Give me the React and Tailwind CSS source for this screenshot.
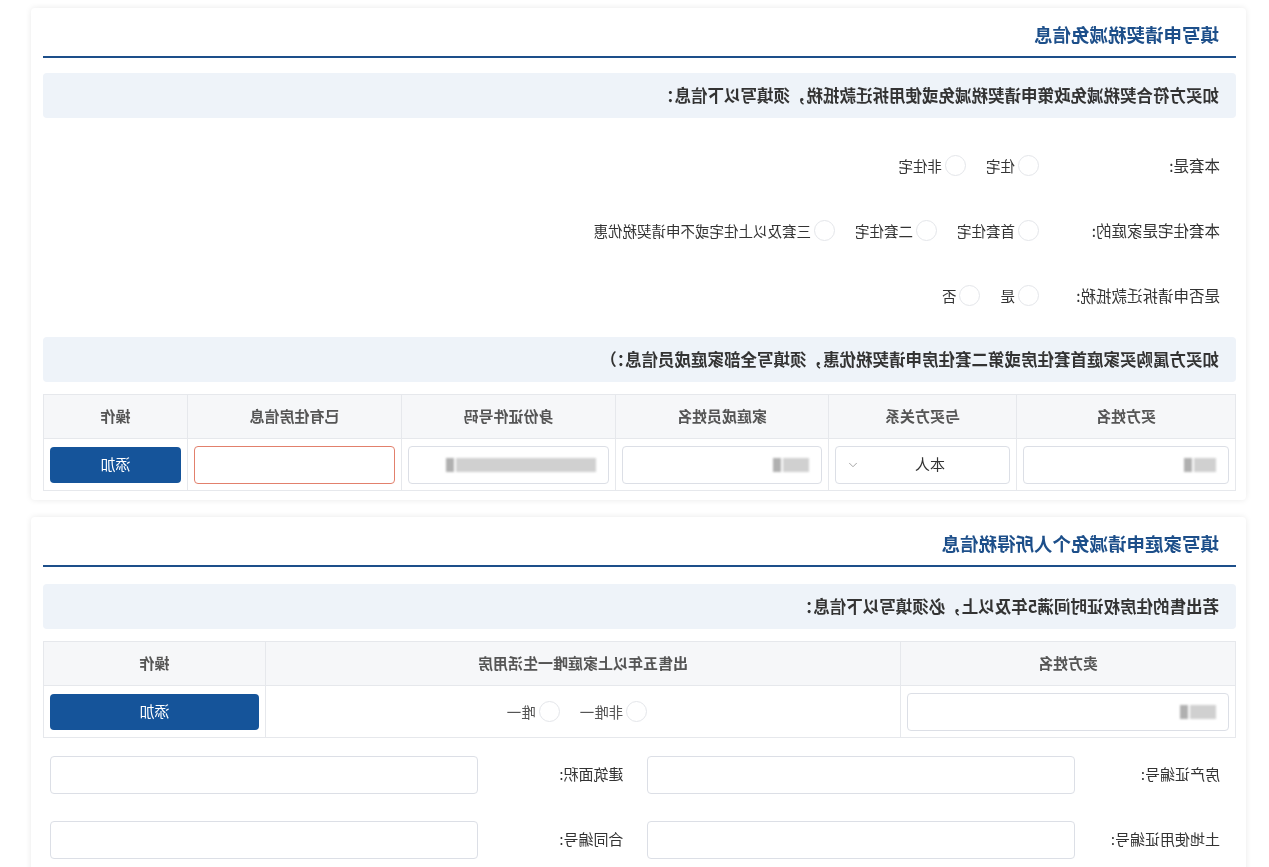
import { ChevronDown } from "lucide-react";

const FONT = { fontFamily: '"Noto Sans CJK SC", "Noto Sans", sans-serif' };

function Blur({ w }) {
  return (
    <span className="inline-flex items-center gap-[2px] blur-[1px]">
      <span className={`inline-block h-[14px] bg-[#d0d0d0] ${w}`} />
      <span className="inline-block h-[14px] w-[8px] bg-[#b0b0b0]" />
    </span>
  );
}

function Radio({ label }) {
  return (
    <label className="flex items-center gap-[3px] mr-[20px]">
      <span className="w-[21px] h-[21px] rounded-full border border-[#e4e6ea] bg-white" />
      <span>{label}</span>
    </label>
  );
}

function RadioRow({ label, options }) {
  return (
    <div className="h-[65px] flex items-center pl-[16px] text-[14.5px] text-[#333]">
      <div className="w-[181px] text-[15.5px]">{label}</div>
      <div className="flex items-center">
        {options.map((o) => (
          <Radio key={o} label={o} />
        ))}
      </div>
    </div>
  );
}

function Title({ text }) {
  return (
    <div className="h-[50px] flex items-center pl-[17px] pt-[6px] border-b-2 border-[#1d4f8a]">
      <span className="text-[18.5px] font-bold text-[#1d4f8a]">{text}</span>
    </div>
  );
}

function InfoBar({ text, className = "" }) {
  return (
    <div className={`h-[45px] flex items-center pl-[17px] bg-[#eef3f9] rounded text-[16.5px] font-bold text-[#333] ${className}`}>
      {text}
    </div>
  );
}

function Input({ children, className = "" }) {
  return (
    <div className={`h-[38px] rounded border border-[#dcdfe6] bg-white flex items-center px-[12px] ${className}`}>
      {children}
    </div>
  );
}

const th = "h-[44px] border border-[#e6e8ec] bg-[#f6f7f9] text-[15px] font-bold text-[#555] text-center";
const td = "h-[52px] border border-[#e6e8ec] px-[6px]";

export default function App() {
  return (
    <div style={FONT} className="w-[1269px] h-[867px] overflow-hidden bg-white -scale-x-100">
      <div className="pl-[23px] pt-[8px] w-[1238px]">
        {/* card 1 */}
        <div className="bg-white rounded shadow-[0_0_6px_rgba(0,0,0,0.09)] pl-[10px] pr-[12px] pb-[9px]">
          <Title text="填写申请契税减免信息" />
          <InfoBar className="mt-[15px]" text="如买方符合契税减免政策申请契税减免或使用拆迁款抵税，须填写以下信息：" />
          <div className="mt-[15px]">
            <RadioRow label="本套是:" options={["住宅", "非住宅"]} />
            <RadioRow label="本套住宅是家庭的:" options={["首套住宅", "二套住宅", "三套及以上住宅或不申请契税优惠"]} />
            <RadioRow label="是否申请拆迁款抵税:" options={["是", "否"]} />
          </div>
          <InfoBar className="mt-[9px]" text="如买方属购买家庭首套住房或第二套住房申请契税优惠，须填写全部家庭成员信息：）" />
          <table className="mt-[12px] w-full border-collapse table-fixed">
            <colgroup>
              <col className="w-[219px]" />
              <col className="w-[188px]" />
              <col className="w-[213px]" />
              <col className="w-[214px]" />
              <col className="w-[214px]" />
              <col className="w-[144px]" />
            </colgroup>
            <thead>
              <tr>
                <th className={th}>买方姓名</th>
                <th className={th}>与买方关系</th>
                <th className={th}>家庭成员姓名</th>
                <th className={th}>身份证件号码</th>
                <th className={th}>已有住房信息</th>
                <th className={th}>操作</th>
              </tr>
            </thead>
            <tbody>
              <tr>
                <td className={td}>
                  <Input>
                    <Blur w="w-[22px]" />
                  </Input>
                </td>
                <td className={td}>
                  <Input className="justify-between pl-[64px] pr-[10px] text-[15px] text-[#333]">
                    <span>本人</span>
                    <ChevronDown size={14} strokeWidth={1.5} className="text-[#999]" />
                  </Input>
                </td>
                <td className={td}>
                  <Input>
                    <Blur w="w-[26px]" />
                  </Input>
                </td>
                <td className={td}>
                  <Input>
                    <Blur w="w-[140px]" />
                  </Input>
                </td>
                <td className={td}>
                  <Input className="border-[#e2806c]" />
                </td>
                <td className={td}>
                  <button className="w-full h-[36px] rounded bg-[#15549a] text-white text-[15px]">添加</button>
                </td>
              </tr>
            </tbody>
          </table>
        </div>

        {/* card 2 */}
        <div className="mt-[17px] bg-white rounded shadow-[0_0_6px_rgba(0,0,0,0.09)] pl-[10px] pr-[12px] pb-[20px]">
          <Title text="填写家庭申请减免个人所得税信息" />
          <InfoBar className="mt-[17px]" text="若出售的住房权证时间满5年及以上，必须填写以下信息：" />
          <table className="mt-[12px] w-full border-collapse table-fixed">
            <colgroup>
              <col className="w-[335px]" />
              <col className="w-[635px]" />
              <col className="w-[222px]" />
            </colgroup>
            <thead>
              <tr>
                <th className={th}>卖方姓名</th>
                <th className={th}>出售五年以上家庭唯一生活用房</th>
                <th className={th}>操作</th>
              </tr>
            </thead>
            <tbody>
              <tr>
                <td className={td}>
                  <Input>
                    <Blur w="w-[26px]" />
                  </Input>
                </td>
                <td className={td}>
                  <div className="flex justify-center items-center text-[14.5px] text-[#555] pl-[32px]">
                    <Radio label="非唯一" />
                    <Radio label="唯一" />
                  </div>
                </td>
                <td className={td}>
                  <button className="w-full h-[36px] rounded bg-[#15549a] text-white text-[15px]">添加</button>
                </td>
              </tr>
            </tbody>
          </table>
          <div className="mt-[4px] grid grid-cols-2 text-[15px] text-[#333]">
            {["房产证编号:", "建筑面积:", "土地使用证编号:", "合同编号:"].map((l) => (
              <div key={l} className="h-[65px] flex items-center pl-[16px]">
                <div className="w-[145px]">{l}</div>
                <Input className="w-[428px]" />
              </div>
            ))}
          </div>
        </div>
      </div>
    </div>
  );
}
